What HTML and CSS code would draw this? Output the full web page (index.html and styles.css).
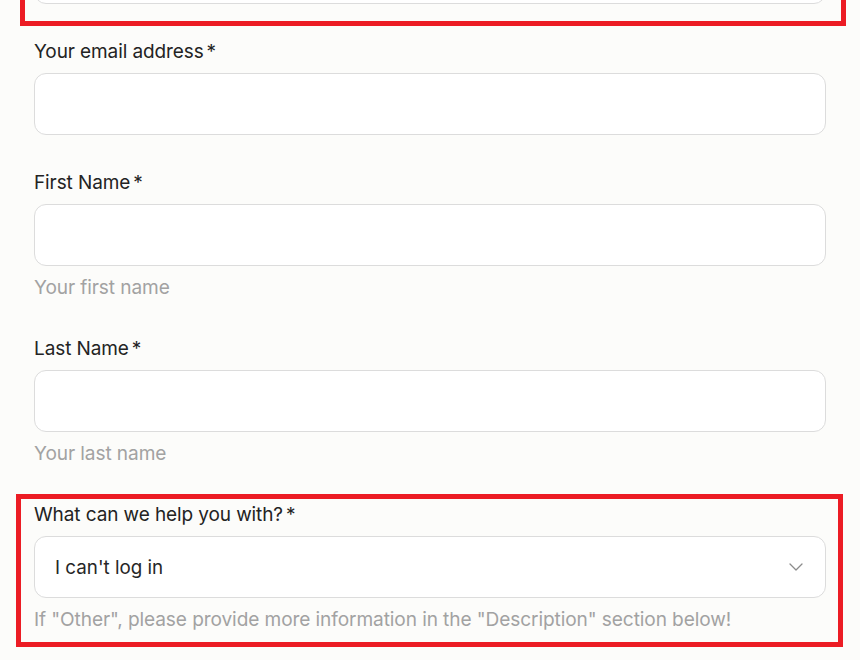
FILE: index.html
```html
<!DOCTYPE html>
<html lang="en">
<head>
<meta charset="utf-8">
<title>Contact support</title>
<link rel="stylesheet" href="styles.css">
</head>
<body>
<form class="form">
  <div class="field field--cut flag flag--top">
    <div class="input"></div>
  </div>

  <div class="field">
    <label class="label">Your email address<span class="req">*</span></label>
    <div class="input"></div>
  </div>

  <div class="field">
    <label class="label">First Name<span class="req">*</span></label>
    <div class="input"></div>
    <p class="hint">Your first name</p>
  </div>

  <div class="field">
    <label class="label">Last Name<span class="req">*</span></label>
    <div class="input"></div>
    <p class="hint">Your last name</p>
  </div>

  <div class="field flag flag--bottom">
    <label class="label">What can we help you with?<span class="req">*</span></label>
    <div class="input select">
      <span class="select-value">I can't log in</span>
      <svg class="chevron" width="14" height="8" viewBox="0 0 14 8" aria-hidden="true">
        <path d="M1 1 L7 7 L13 1" fill="none" stroke="#8c8c8c" stroke-width="1.3" stroke-linecap="round" stroke-linejoin="round"/>
      </svg>
    </div>
    <p class="hint">If "Other", please provide more information in the "Description" section below!</p>
  </div>
</form>
</body>
</html>
```

FILE: styles.css
```css
* { box-sizing: border-box; }

html, body {
  margin: 0;
  padding: 0;
  background: #fcfcfa;
  overflow: hidden;
}

body {
  font-family: Inter, "Liberation Sans", Arial, sans-serif;
  color: #232323;
  width: 860px;
  height: 660px;
}

.form {
  display: flex;
  flex-direction: column;
  gap: 36px;
  padding: 0 34px;
  margin: 0;
}

.field {
  display: flex;
  flex-direction: column;
}

.field--cut {
  margin-top: -58px;
}

.label {
  font-size: 19px;
  line-height: 24px;
  margin-bottom: 9px;
  color: #232323;
  letter-spacing: -0.1px;
}

.req {
  margin-left: 3px;
}

.input {
  height: 62px;
  background: #ffffff;
  border: 1px solid #dcdcdc;
  border-radius: 12px;
}

.select {
  display: flex;
  align-items: center;
  justify-content: space-between;
  padding: 0 22px 0 20px;
}

.select-value {
  font-size: 18.8px;
  color: #262626;
}

.chevron {
  display: block;
}

.hint {
  margin: 7px 0 0;
  font-size: 19.1px;
  line-height: 28px;
  color: #a2a2a2;
  letter-spacing: -0.1px;
}

.flag {
  position: relative;
}

.flag::after {
  content: "";
  position: absolute;
  border: 5px solid #ec1c24;
  pointer-events: none;
}

.flag--top::after {
  top: -40px;
  left: -14px;
  right: -20px;
  bottom: -22px;
}

.flag--bottom::after {
  top: -9px;
  left: -18px;
  right: -17px;
  bottom: -14px;
}
```
